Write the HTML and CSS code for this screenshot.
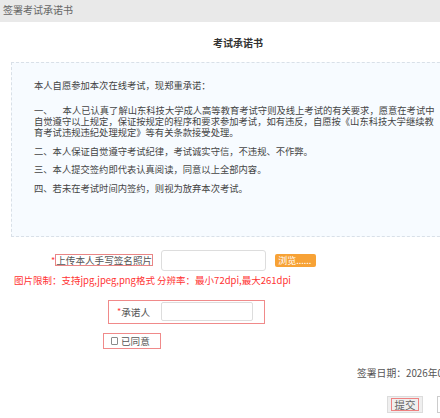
FILE: index.html
```html
<!DOCTYPE html>
<html lang="zh-CN">
<head>
<meta charset="utf-8">
<title>签署考试承诺书</title>
<link rel="stylesheet" href="styles.css">
</head>
<body>
<div class="page">
  <div class="header">签署考试承诺书</div>
  <div class="title">考试承诺书</div>
  <div class="promise">
    <p class="lead">本人自愿参加本次在线考试，现郑重承诺：</p>
    <p>一、<span class="indent"></span>本人已认真了解山东科技大学成人高等教育考试守则及线上考试的有关要求，愿意在考试中<br>自觉遵守以上规定，保证按规定的程序和要求参加考试，如有违反，自愿按《山东科技大学继续教<br>育考试违规违纪处理规定》等有关条款接受处理。</p>
    <p>二、本人保证自觉遵守考试纪律，考试诚实守信，不违规、不作弊。</p>
    <p>三、本人提交签约即代表认真阅读，同意以上全部内容。</p>
    <p>四、若未在考试时间内签约，则视为放弃本次考试。</p>
  </div>
  <div class="upload-row">
    <span class="star">*</span><span class="upload-label">上传本人手写签名照片</span>
    <span class="file-input"></span>
    <span class="browse">浏览......</span>
  </div>
  <div class="limit">图片限制：支持jpg,jpeg,png格式 分辨率：最小72dpi,最大261dpi</div>
  <div class="signer">
    <span class="star">*</span><span class="signer-label">承诺人</span>
    <span class="text-input"></span>
  </div>
  <div class="agree">
    <span class="check"></span><span class="agree-label">已同意</span>
  </div>
  <div class="date">签署日期：2026年01月15日</div>
  <div class="actions">
    <span class="btn btn-submit"><span class="btn-focus">提交</span></span>
    <span class="btn btn-close">关闭</span>
  </div>
</div>
</body>
</html>
```
FILE: styles.css
```css
html, body {
  margin: 0;
  padding: 0;
  overflow: hidden;
  background: #ffffff;
}
body {
  font-family: "Noto Sans CJK SC", "Noto Sans", sans-serif;
  color: #555555;
}
.page {
  width: 476px;
}
.header {
  height: 22px;
  line-height: 19px;
  padding-left: 3px;
  background: #e9e9e9;
  color: #666666;
  font-size: 10px;
}
.title {
  margin-top: 14px;
  line-height: 14px;
  text-align: center;
  font-size: 10px;
  font-weight: bold;
  color: #333333;
}
.promise {
  margin: 12px 11px 0;
  padding: 17px 22px 42px;
  border: 1px dashed #d9e0e8;
  background: #f7fbff;
  font-size: 9.3px;
  line-height: 11px;
  color: #444444;
  white-space: nowrap;
}
.promise p {
  margin: 0 0 7.5px;
}
.promise p.lead {
  margin-bottom: 14px;
}
.promise p:last-child {
  margin-bottom: 0;
}
.indent {
  display: inline-block;
  width: 10px;
}
.upload-row {
  display: flex;
  align-items: center;
  margin-top: 13px;
  padding-left: 51px;
  height: 21px;
  font-size: 9.6px;
}
.star {
  color: #ff3b3b;
  font-size: 9px;
  line-height: 9px;
}
.upload-label {
  border: 1px solid #e98686;
  line-height: 10px;
  padding: 0;
  color: #555555;
}
.file-input {
  margin-left: 8px;
  width: 103px;
  height: 19px;
  border: 1px solid #dddddd;
  border-radius: 3px;
  background: #ffffff;
}
.browse {
  margin-left: 9px;
  width: 41px;
  height: 13px;
  line-height: 13px;
  border-radius: 2px;
  background: #f7a236;
  color: #ffffff;
  font-size: 9px;
  padding-left: 3px;
  box-sizing: border-box;
}
.limit {
  margin-top: 3px;
  padding-left: 14px;
  line-height: 12px;
  font-size: 9.5px;
  color: #ff3333;
}
.signer {
  display: flex;
  align-items: center;
  box-sizing: border-box;
  margin: 14px 0 0 108px;
  width: 157px;
  height: 24px;
  padding-left: 8px;
  border: 1px solid #f08a8a;
  font-size: 9.6px;
}
.signer-label {
  color: #555555;
}
.text-input {
  margin-left: 11px;
  width: 90px;
  height: 17px;
  border: 1px solid #dddddd;
  border-radius: 2px;
  background: #ffffff;
}
.agree {
  display: flex;
  align-items: center;
  box-sizing: border-box;
  margin: 9px 0 0 103px;
  width: 58px;
  height: 16px;
  padding-left: 7px;
  border: 1px solid #f08a8a;
  font-size: 9.6px;
}
.check {
  width: 5px;
  height: 6px;
  border: 1px solid #8a8a8a;
  border-radius: 1px;
  background: #ffffff;
}
.agree-label {
  margin-left: 3px;
  color: #555555;
}
.date {
  margin-top: 18px;
  padding-left: 357px;
  line-height: 12px;
  font-size: 9.8px;
  white-space: nowrap;
  color: #555555;
}
.actions {
  display: flex;
  margin-top: 17px;
  padding-left: 387px;
}
.btn {
  display: flex;
  align-items: center;
  justify-content: center;
  box-sizing: border-box;
  height: 17px;
  font-size: 10.5px;
  color: #666666;
  flex-shrink: 0;
}
.btn-submit {
  width: 36px;
  border: 1px solid #dcdcdc;
  background: #efefef;
}
.btn-focus {
  width: 28px;
  height: 13px;
  line-height: 11px;
  box-sizing: border-box;
  border: 1px solid #ef8181;
  text-align: center;
}
.btn-close {
  margin-left: 14px;
  width: 40px;
  border: 1px solid #cccccc;
  background: #ffffff;
}
```
